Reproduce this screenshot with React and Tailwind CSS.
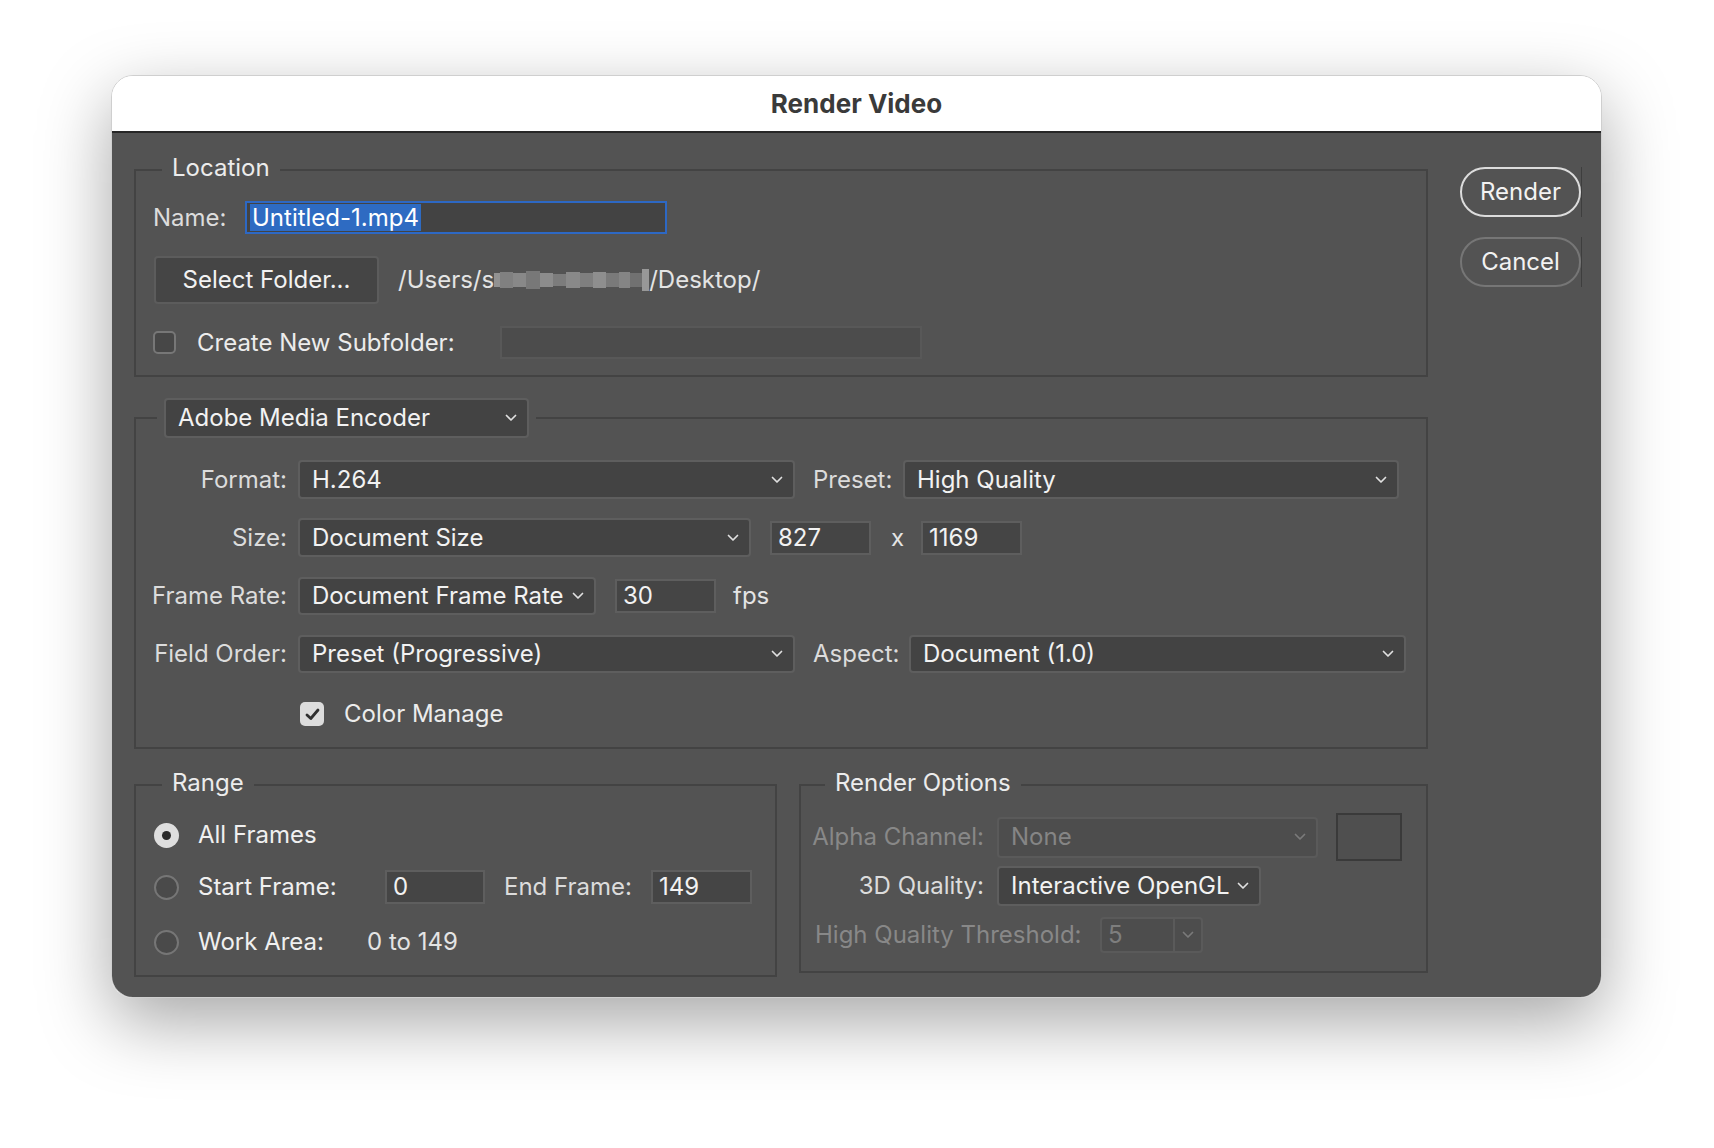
import React from "react";

function Chevron({ className = "" }) {
  return (
    <svg width="12" height="8" viewBox="0 0 12 8" className={className}>
      <path d="M1.5 1.5 L6 6 L10.5 1.5" fill="none" stroke="currentColor" strokeWidth="1.7" strokeLinecap="round" strokeLinejoin="round" />
    </svg>
  );
}

function Dropdown({ w, h = "h-[39px]", value, disabled = false }) {
  return (
    <div
      className={`${w} ${h} flex items-center justify-between pl-[12px] pr-[10px] rounded-[4px] border-2 ${
        disabled ? "border-[#5a5a5a] bg-[#4d4d4d] text-[#858585]" : "border-[#5e5e5e] bg-[#434343] text-[#f2f2f2]"
      }`}
    >
      <span className="whitespace-nowrap">{value}</span>
      <Chevron className={disabled ? "text-[#7a7a7a]" : "text-[#e0e0e0]"} />
    </div>
  );
}

function TextBox({ w = "w-[101px]", value }) {
  return (
    <div className={`${w} h-[34px] flex items-center pl-[6px] border-2 border-[#5e5e5e] bg-[#454545] text-[#f2f2f2]`}>
      {value}
    </div>
  );
}

function Label({ w = "w-[151px]", className = "", children }) {
  return (
    <div className={`${w} shrink-0 flex justify-end whitespace-nowrap ${className}`}>
      <span>{children}</span>
    </div>
  );
}

function Radio({ checked }) {
  return checked ? (
    <div className="w-[25px] h-[25px] rounded-full bg-[#dedede] flex items-center justify-center">
      <div className="w-[9px] h-[9px] rounded-full bg-[#2a2a2a]" />
    </div>
  ) : (
    <div className="w-[25px] h-[25px] rounded-full border-2 border-[#767676] bg-[#4a4a4a]" />
  );
}

function Blurred() {
  const blocks = [
    ["w-[6px]", "h-[14px]", "bg-[#a8a8a8]"],
    ["w-[13px]", "h-[16px]", "bg-[#8f8f8f]"],
    ["w-[13px]", "h-[14px]", "bg-[#9a9a9a]"],
    ["w-[14px]", "h-[18px]", "bg-[#858585]"],
    ["w-[13px]", "h-[14px]", "bg-[#a0a0a0]"],
    ["w-[13px]", "h-[12px]", "bg-[#8a8a8a]"],
    ["w-[14px]", "h-[16px]", "bg-[#9c9c9c]"],
    ["w-[13px]", "h-[14px]", "bg-[#8e8e8e]"],
    ["w-[13px]", "h-[16px]", "bg-[#a2a2a2]"],
    ["w-[13px]", "h-[14px]", "bg-[#888888]"],
    ["w-[11px]", "h-[16px]", "bg-[#969696]"],
    ["w-[12px]", "h-[14px]", "bg-[#7c7c7c]"],
    ["w-[7px]", "h-[22px]", "bg-[#b0b0b0]"],
  ];
  return (
    <div className="flex items-center h-[24px] opacity-75">
      {blocks.map((b, i) => (
        <div key={i} className={`${b[0]} ${b[1]} ${b[2]}`} />
      ))}
    </div>
  );
}

export default function App() {
  return (
    <div className="min-h-screen bg-white pt-[75px] pl-[111px] font-['Inter','Noto_Sans',sans-serif] text-[24px] leading-none">
      <div className="w-[1491px] h-[923px] rounded-[22px] overflow-hidden border border-[#cfcfcf] shadow-[0_24px_70px_rgba(0,0,0,0.35)] flex flex-col">
        {/* title bar */}
        <div className="h-[57px] bg-white border-b-2 border-[#262626] flex items-center justify-center">
          <span className="text-[26px] font-bold text-[#3a3a3a]">Render Video</span>
        </div>

        {/* body */}
        <div className="flex-1 bg-[#535353] flex pl-[22px] pt-[23px] text-[#dcdcdc]">
          <div className="w-[1294px] flex flex-col">
            {/* Location */}
            <fieldset className="border-2 border-[#434343] pl-[17px] pb-[16px]">
              <legend className="ml-[9px] px-[10px] h-[28px] text-[#ececec]">Location</legend>
              <div className="flex items-center mt-[17px]">
                <span className="w-[92px]">Name:</span>
                <div className="w-[422px] h-[33px] border-2 border-[#2d68c4] bg-[#434343] flex items-center pl-[3px]">
                  <span className="bg-[#2e6bc2] text-white h-[27px] flex items-center px-[2px]">Untitled-1.mp4</span>
                </div>
              </div>
              <div className="flex items-center mt-[22px]">
                <div className="w-[225px] h-[48px] ml-[1px] rounded-[4px] border-2 border-[#5c5c5c] bg-[#454545] flex items-center justify-center text-[#f2f2f2]">
                  Select Folder...
                </div>
                <div className="ml-[19px] flex items-center text-[#e4e4e4]">
                  <span>/Users/s</span>
                  <Blurred />
                  <span>/Desktop/</span>
                </div>
              </div>
              <div className="flex items-center mt-[22px]">
                <div className="w-[23px] h-[23px] rounded-[5px] border-2 border-[#777777] bg-[#474747]" />
                <span className="ml-[21px] w-[303px] text-[#ececec]">Create New Subfolder:</span>
                <div className="w-[422px] h-[33px] border-2 border-[#585858] bg-[#4c4c4c]" />
              </div>
            </fieldset>

            {/* Encoder */}
            <fieldset className="mt-[21px] border-2 border-[#434343] pb-[21px]">
              <legend className="ml-[21px] px-[7px]">
                <Dropdown w="w-[365px]" h="h-[40px]" value="Adobe Media Encoder" />
              </legend>
              <div className="flex items-center mt-[22px] h-[39px]">
                <Label>Format:</Label>
                <div className="ml-[11px]"><Dropdown w="w-[497px]" value="H.264" /></div>
                <span className="ml-[18px] w-[90px]">Preset:</span>
                <Dropdown w="w-[496px]" value="High Quality" />
              </div>
              <div className="flex items-center mt-[19px] h-[39px]">
                <Label>Size:</Label>
                <div className="ml-[11px]"><Dropdown w="w-[453px]" value="Document Size" /></div>
                <div className="ml-[19px]"><TextBox value="827" /></div>
                <span className="ml-[20px] w-[30px] text-[#e4e4e4]">x</span>
                <TextBox value="1169" />
              </div>
              <div className="flex items-center mt-[20px] h-[38px]">
                <Label>Frame Rate:</Label>
                <div className="ml-[11px]"><Dropdown w="w-[298px]" h="h-[38px]" value="Document Frame Rate" /></div>
                <div className="ml-[19px]"><TextBox value="30" /></div>
                <span className="ml-[17px] text-[#e4e4e4]">fps</span>
              </div>
              <div className="flex items-center mt-[20px] h-[38px]">
                <Label>Field Order:</Label>
                <div className="ml-[11px]"><Dropdown w="w-[497px]" h="h-[38px]" value="Preset (Progressive)" /></div>
                <span className="ml-[18px] w-[96px]">Aspect:</span>
                <Dropdown w="w-[497px]" h="h-[38px]" value="Document (1.0)" />
              </div>
              <div className="flex items-center mt-[29px] h-[24px] pl-[164px]">
                <div className="w-[24px] h-[24px] rounded-[5px] bg-[#dcdcdc] flex items-center justify-center">
                  <svg width="15" height="13" viewBox="0 0 15 13">
                    <path d="M2 7 L5.8 10.5 L13 2" fill="none" stroke="#2f2f2f" strokeWidth="2.8" strokeLinecap="round" strokeLinejoin="round" />
                  </svg>
                </div>
                <span className="ml-[20px] text-[#ececec]">Color Manage</span>
              </div>
            </fieldset>

            {/* Range + Render Options */}
            <div className="flex mt-[22px] gap-[22px] items-start">
              <fieldset className="w-[643px] border-2 border-[#434343] pl-[18px] pb-[16px]">
                <legend className="ml-[8px] px-[10px] h-[28px] text-[#ececec]">Range</legend>
                <div className="flex items-center h-[34px] mt-[19px]">
                  <Radio checked />
                  <span className="ml-[19px] text-[#f0f0f0]">All Frames</span>
                </div>
                <div className="flex items-center h-[34px] mt-[18px]">
                  <Radio />
                  <span className="ml-[19px] w-[187px] text-[#f0f0f0]">Start Frame:</span>
                  <TextBox w="w-[100px]" value="0" />
                  <span className="ml-[19px] w-[147px]">End Frame:</span>
                  <TextBox value="149" />
                </div>
                <div className="flex items-center h-[34px] mt-[21px]">
                  <Radio />
                  <span className="ml-[19px] w-[169px] text-[#f0f0f0]">Work Area:</span>
                  <span className="text-[#e4e4e4]">0 to 149</span>
                </div>
              </fieldset>

              <fieldset className="w-[629px] border-2 border-[#434343] pl-[14px] pb-[18px]">
                <legend className="ml-[10px] px-[10px] h-[28px] text-[#ececec]">Render Options</legend>
                <div className="flex items-center h-[48px] mt-[14px]">
                  <Label w="w-[169px]" className="text-[#888888]">Alpha Channel:</Label>
                  <div className="ml-[13px]"><Dropdown w="w-[321px]" h="h-[41px]" value="None" disabled /></div>
                  <div className="ml-[18px] w-[66px] h-[48px] border-2 border-[#3a3a3a] bg-[#4f4f4f]" />
                </div>
                <div className="flex items-center h-[40px] mt-[5px]">
                  <Label w="w-[169px]">3D Quality:</Label>
                  <div className="ml-[13px]"><Dropdown w="w-[264px]" h="h-[40px]" value="Interactive OpenGL" /></div>
                </div>
                <div className="flex items-center h-[36px] mt-[11px]">
                  <span className="w-[285px] whitespace-nowrap text-[#888888]">High Quality Threshold:</span>
                  <div className="w-[103px] h-[36px] rounded-[4px] border-2 border-[#5a5a5a] bg-[#4d4d4d] flex items-center text-[#7e7e7e]">
                    <span className="w-[73px] pl-[6px] h-full flex items-center border-r-2 border-[#5a5a5a]">5</span>
                    <div className="flex-1 flex justify-center">
                      <Chevron className="text-[#7a7a7a]" />
                    </div>
                  </div>
                </div>
              </fieldset>
            </div>
          </div>

          {/* buttons */}
          <div className="ml-[32px] pt-[11px] flex flex-col gap-[20px]">
            <div className="flex items-center">
              <div className="w-[121px] h-[50px] rounded-full border-2 border-[#dcdcdc] flex items-center justify-center text-[#f2f2f2]">
                Render
              </div>
              <div className="w-px h-[50px] bg-[#3e3e3e]" />
            </div>
            <div className="flex items-center">
              <div className="w-[121px] h-[50px] rounded-full border-2 border-[#767676] flex items-center justify-center text-[#f2f2f2]">
                Cancel
              </div>
              <div className="w-px h-[50px] bg-[#3e3e3e]" />
            </div>
          </div>
        </div>
      </div>
    </div>
  );
}
